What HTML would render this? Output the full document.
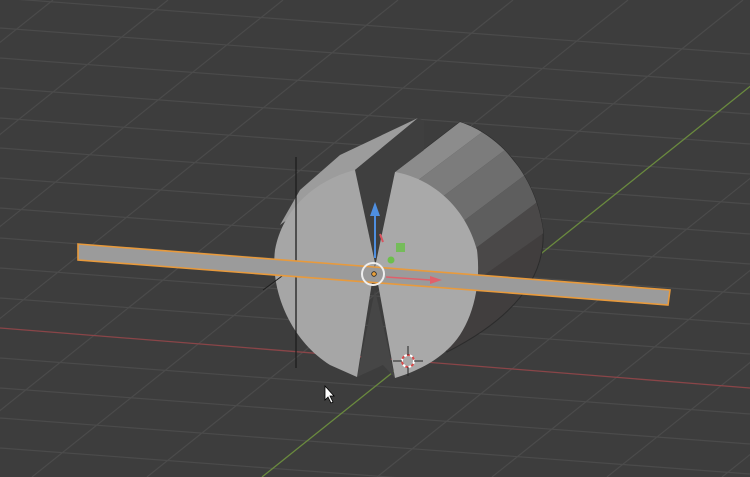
<!DOCTYPE html>
<html><head><style>
html,body{margin:0;padding:0;background:#3d3d3d;overflow:hidden;width:750px;height:477px}
svg{display:block;position:absolute;left:0;top:0}
</style></head><body>
<svg width="750" height="477" viewBox="0 0 750 477" xmlns="http://www.w3.org/2000/svg">
<defs>
<clipPath id="cyl"><path d="M395,172 L460,122 C500,135 535,175 543,230 C546,280 510,320 447,352 Z"/></clipPath>
</defs>
<rect width="750" height="477" fill="#3d3d3d"/>
<g stroke="#4b4b4b" stroke-width="1.2">
<line x1="0" y1="-2" x2="750" y2="54"/>
<line x1="0" y1="28" x2="750" y2="84"/>
<line x1="0" y1="58" x2="750" y2="114"/>
<line x1="0" y1="88" x2="750" y2="144"/>
<line x1="0" y1="118" x2="750" y2="174"/>
<line x1="0" y1="148" x2="750" y2="204"/>
<line x1="0" y1="178" x2="750" y2="234"/>
<line x1="0" y1="208" x2="750" y2="264"/>
<line x1="0" y1="238" x2="750" y2="294"/>
<line x1="0" y1="268" x2="750" y2="324"/>
<line x1="0" y1="298" x2="750" y2="354"/>
<line x1="0" y1="358" x2="750" y2="414"/>
<line x1="0" y1="388" x2="750" y2="444"/>
<line x1="0" y1="418" x2="750" y2="474"/>
<line x1="0" y1="448" x2="750" y2="504"/>
<line x1="53" y1="0" x2="-543" y2="477"/>
<line x1="168" y1="0" x2="-428" y2="477"/>
<line x1="283" y1="0" x2="-313" y2="477"/>
<line x1="398" y1="0" x2="-198" y2="477"/>
<line x1="513" y1="0" x2="-83" y2="477"/>
<line x1="628" y1="0" x2="32" y2="477"/>
<line x1="743" y1="0" x2="147" y2="477"/>
<line x1="973" y1="0" x2="377" y2="477"/>
<line x1="1088" y1="0" x2="492" y2="477"/>
<line x1="1203" y1="0" x2="607" y2="477"/>
<line x1="1318" y1="0" x2="722" y2="477"/>
</g>
<line x1="0" y1="328" x2="750" y2="388" stroke="#8a4548" stroke-width="1.3"/>
<line x1="858" y1="0" x2="262" y2="477" stroke="#6a8a3e" stroke-width="1.3"/>

<path d="M395,172 L460,122 C500,135 535,175 543,230 C546,280 510,320 447,352 Z" fill="#413e3e" stroke="#2c2c2c" stroke-width="1"/>
<g clip-path="url(#cyl)">
<polygon points="380,170 460,110 485,130 405,190" fill="#8c8c8c"/>
<polygon points="405,190 485,130 505,150 425,210" fill="#7c7c7c"/>
<polygon points="425,210 505,150 525,175 445,235" fill="#6e6e6e"/>
<polygon points="445,235 525,175 540,200 460,260" fill="#5e5e5e"/>
<polygon points="460,260 540,200 548,230 470,285" fill="#4a4848"/>
</g>
<polygon points="280,225 300,190 340,155 418,118 355,170" fill="#9c9c9c"/>
<polygon points="355,170 418,118 424,121 424,150 395,172 375,262" fill="#3f3f3f"/>
<polygon points="375,290 357,377 383,365 395,378" fill="#464646"/>
<path d="M355,170 C315,180 282,210 275,250 C270,290 290,340 330,365 L357,377 L375,263 Z" fill="#a6a6a6"/>
<path d="M395,172 C430,178 465,205 477,250 C482,290 470,330 447,350 C432,364 412,373 395,378 L375,267 Z" fill="#a9a9a9"/>
<line x1="296" y1="157" x2="296" y2="368" stroke="#1e1e1e" stroke-width="1.3"/>
<line x1="263" y1="290" x2="293" y2="268" stroke="#1e1e1e" stroke-width="1"/>
<polygon points="78,244 670,290 668,305 78,260" fill="#9b9b9b" stroke="#e89a3c" stroke-width="1.6"/>
<line x1="375" y1="258" x2="375" y2="215" stroke="#4f8fe0" stroke-width="2"/>
<polygon points="375,202 370,216 380,216" fill="#4f8fe0"/>
<path d="M380,234 l3,8" stroke="#d9545f" stroke-width="2"/>
<line x1="386" y1="277" x2="430" y2="280" stroke="#e0606b" stroke-width="1.6"/>
<polygon points="442,280 430,276 430,284" fill="#e0606b"/>
<rect x="396" y="243" width="9" height="9" fill="#6cbf4c" opacity="0.85"/>
<circle cx="391" cy="260" r="3.5" fill="#6cbf4c"/>
<circle cx="373" cy="274" r="11" fill="none" stroke="#eeeeee" stroke-width="2"/>
<circle cx="374" cy="274" r="2.3" fill="#e8a03c" stroke="#222" stroke-width="0.8"/>
<circle cx="408" cy="361" r="6" fill="none" stroke="#ffffff" stroke-width="2" stroke-dasharray="3 3"/>
<circle cx="408" cy="361" r="6" fill="none" stroke="#d84a4a" stroke-width="2" stroke-dasharray="3 3" stroke-dashoffset="3"/>
<path d="M408,346 v9 M408,367 v9 M393,361 h9 M414,361 h9" stroke="#222" stroke-width="1"/>
<path d="M325,386 L325,400 L328,397 L331,403 L333,402 L330,396 L334,396 Z" fill="#fff" stroke="#000" stroke-width="0.8"/>
</svg>
</body></html>
